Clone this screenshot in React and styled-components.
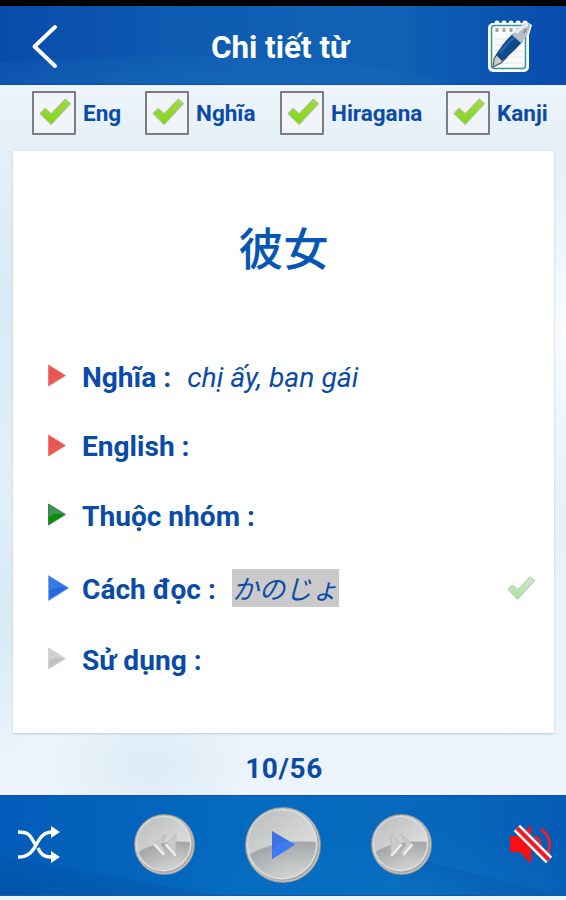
import React from "react";
import styled, { createGlobalStyle } from "styled-components";

const GlobalStyle = createGlobalStyle`
  * { box-sizing: border-box; }
  body { margin: 0; background: #fff; }
`;

const Screen = styled.div`
  width: 566px;
  height: 900px;
  overflow: hidden;
  display: flex;
  flex-direction: column;
  font-family: Roboto, "Noto Sans CJK JP", sans-serif;
  color: #0b4ba8;
  background:
    radial-gradient(ellipse 50px 150px at 0 610px, #d5e8f4, transparent),
    radial-gradient(ellipse 100px 70px at 150px 765px, #dcebf5, transparent),
    radial-gradient(ellipse 50px 200px at 566px 330px, #fbfdff, transparent),
    linear-gradient(#edf5fb 80px, #e5eff7 150px, #d9e9f5 300px, #e9f3fa 600px, #edf4fb 800px);
`;

const StatusStrip = styled.div`
  height: 6px;
  flex: none;
  background: #000;
`;

const Header = styled.header`
  height: 79px;
  flex: none;
  display: grid;
  grid-template-columns: 90px 1fr 90px;
  align-items: center;
  border-bottom: 1px solid #0a4ca6;
  background:
    radial-gradient(ellipse 300px 36px at 160px 86px, rgba(30, 116, 190, 0.3) 50%, rgba(30, 116, 190, 0.15) 97%, transparent 100%),
    linear-gradient(90deg, #084bab 0, #0f5cb2 35%, #1062b5 68%, #084bad 100%);
`;

const Title = styled.h1`
  margin: 5px 0 0 -6px;
  font-size: 31.4px;
  line-height: 40px;
  font-weight: 700;
  text-align: center;
  color: #fff;
`;

const IconButton = styled.button`
  display: flex;
  justify-content: ${(p) => p.$justify || "center"};
  padding: 0;
  border: 0;
  background: none;
`;

const BackButton = styled(IconButton)`
  padding: 3px 0 0 31px;
`;

const NoteButton = styled(IconButton)`
  padding: 1px 0 0 11px;
`;

const MuteButton = styled(IconButton)`
  padding-left: 7px;
`;

const Filters = styled.div`
  height: 66px;
  flex: none;
  display: grid;
  grid-template-columns: 113px 135px 166px 1fr;
  align-items: start;
  padding: 6px 0 0 32px;
`;

const Filter = styled.label`
  display: flex;
  align-items: center;
  gap: 7px;
  font-size: 22.5px;
  line-height: 44px;
  font-weight: 700;
  white-space: nowrap;
`;

const CheckBox = styled.span`
  width: 44px;
  height: 44px;
  display: flex;
  align-items: center;
  justify-content: center;
  padding: 0 0 3px 2px;
  border: 2px solid #7a7e82;
  border-radius: 1px;
  background: #f1f5fa;
`;

const Card = styled.main`
  height: 582px;
  flex: none;
  margin: 0 12px 0 13px;
  background: #fff;
  box-shadow: 0 1px 2px #b9c8d4;
`;

const Word = styled.div`
  height: 190px;
  display: flex;
  align-items: center;
  justify-content: center;
  font-family: "Noto Sans CJK JP", sans-serif;
  font-size: 45px;
  font-weight: 500;
  color: #0757b2;
`;

const Details = styled.div`
  display: grid;
  grid-template-rows: 69px 70px 69px 77px 65px;
  padding: 0 18px 0 35px;
`;

const Detail = styled.div`
  display: grid;
  grid-template-columns: 34px auto 1fr auto;
  align-items: center;
  font-size: 28.1px;
`;

const Label = styled.span`
  font-weight: 700;
  padding-top: 3px;
`;

const Meaning = styled.span`
  padding-top: 3px;
  margin-left: 16px;
  font-size: 28.3px;
  font-style: italic;
`;

const Reading = styled.span`
  justify-self: start;
  margin-left: 16px;
  height: 38px;
  width: 107px;
  line-height: 37px;
  text-align: center;
  font-family: "Noto Sans CJK JP", sans-serif;
  font-size: 26.5px;
  font-style: italic;
  background: #cacaca;
`;

const Counter = styled.div`
  height: 62px;
  flex: none;
  padding: 8px 0 0 2px;
  display: flex;
  align-items: center;
  justify-content: center;
  font-size: 28px;
  font-weight: 700;
  letter-spacing: 0.6px;
`;

const Player = styled.footer`
  height: 101px;
  flex: none;
  display: grid;
  grid-template-columns: 78px 174px 62px 174px 78px;
  align-items: center;
  justify-items: center;
  padding-bottom: 2px;
  border-top: 1px solid #1450a5;
  border-bottom: 1px solid #1458a6;
  background:
    linear-gradient(190.2deg, transparent 70%, rgba(0, 70, 140, 0.18) 71%, rgba(0, 70, 140, 0.4)) 0 0 / 210px 101px no-repeat,
    linear-gradient(194.8deg, transparent 70%, rgba(0, 78, 158, 0.25) 71%, transparent 92%) 400px 0 / 166px 101px no-repeat,
    radial-gradient(ellipse 260px 60px at 410px 90px, rgba(16, 120, 198, 0.4), transparent),
    linear-gradient(90deg, #025cb9, #046bc0 45%, #0668bd 75%, #055bb5);
`;

const TransportGroup = styled.div`
  grid-column: 2 / 5;
  width: 298px;
  display: flex;
  align-items: center;
  justify-content: space-between;
`;

const RoundButton = styled.button`
  width: ${(p) => p.$size}px;
  height: ${(p) => p.$size}px;
  padding: 0;
  display: flex;
  align-items: center;
  justify-content: center;
  border: 1.5px solid #91979c;
  border-radius: 50%;
  box-shadow: inset 0 0 0 1px #c9c8c5, inset -1px -1px 0 1.5px #aaa7a4, inset -1px -1px 1px 3px #e1e1df;
  background:
    radial-gradient(ellipse 100% 60% at 75% 104%, #dededc 0, #c6c8c8 45%, #a3a7a7 96%, transparent 100%),
    linear-gradient(145deg, #b8bbbb, #d9dada 60%, #c8cbcb);
`;

const Tick = ({ pale, size = 34 }) => (
  <svg width={size} height={size * 0.9} viewBox="0 0 31 28">
    <defs>
      <linearGradient id={pale ? "paleTick" : "tick"} x1="0" y1="0" x2="0" y2="1">
        <stop stopColor={pale ? "#d9e5d8" : "#a3da49"} />
        <stop offset="1" stopColor={pale ? "#a5e597" : "#7ed615"} />
      </linearGradient>
    </defs>
    <path
      d="M2 16 L6.5 11.5 L12 16.5 L25 3 L29.5 7 L12 26 Z"
      fill={`url(#${pale ? "paleTick" : "tick"})`}
      stroke={pale ? "#bccdbb" : "#a8c77b"}
      strokeWidth="1.2"
      strokeLinejoin="round"
    />
  </svg>
);

const markerColors = {
  red: ["#e45450", "#f57c72", "#e65a55"],
  green: ["#3d9450", "#437c4c", "#07900d"],
  blue: ["#3778e7", "#3d83ed", "#2c66dc"],
  gray: ["#cfd1d1", "#d2d4d4", "#bfc1c1"],
};

const Marker = ({ color }) => {
  const [top, middle, bottom] = markerColors[color];
  const big = color === "blue";
  return (
    <svg width={big ? 21 : 18} height={big ? 26 : 23} viewBox="0 0 18 23">
      <path d="M.5 1 L17.5 11.5 L.5 22 Z" fill={top} stroke={middle} />
      <path d="M1 14 Q7 9 16.5 11.5 L1 21 Z" fill={bottom} />
    </svg>
  );
};

const BackIcon = () => (
  <svg width="28" height="44" viewBox="0 0 28 44">
    <path d="M24 2 L3.5 21.5 L24 41" fill="none" stroke="#fff" strokeWidth="3.8" strokeLinecap="round" strokeLinejoin="round" />
  </svg>
);

const NoteIcon = () => (
  <svg width="46" height="54" viewBox="0 0 46 54">
    <rect x="1" y="4" width="41" height="49" rx="5" fill="#fff" />
    <path d="M10 4h.1M17 4h.1M24 4h.1M31 4h.1M38 4h.1" stroke="#fff" strokeWidth="5" strokeLinecap="round" />
    <path d="M34 10L40 3L45 6L42 16L36 22Z" fill="#fff" />
    <rect x="4.5" y="6.5" width="34" height="43" rx="3" fill="#f8fbf8" stroke="#37959c" strokeWidth="1.5" />
    <path d="M10 9v4M17 9v4M24 9v4M31 9v4" stroke="#a0a5a5" strokeWidth="3" />
    <path d="M7 20h29M7 26h29M7 32h29M7 38h29M7 44h29" stroke="#dde7e4" />
    <path d="M6 48 L7 40 L12 32 L20 38 L14 44 Z" fill="#c9cfcf" stroke="#4d5963" strokeWidth="1.2" />
    <path d="M9 36 Q17 22 27 14 L36 22 Q26 34 15 42 Z" fill="#124989" />
    <path d="M13 34 Q21 23 28 18" stroke="#2468ae" strokeWidth="2.5" fill="none" />
    <path d="M25 16 L34 7 Q39 3 43 5 Q43 12 38 19 L34 24 Z" fill="#b7bec7" />
    <path d="M29 14 Q35 7 41 6" stroke="#e9edef" strokeWidth="3" fill="none" />
    <path d="M37 14L39 10" stroke="#6b7886" strokeWidth="1.5" />
  </svg>
);

const ShuffleIcon = () => (
  <svg width="44" height="38" viewBox="0 0 44 38">
    <path d="M1 6 C13 6 13 10 18 18 M21 22 C25 31 30 31 36 31 M1 31 C23 31 16 6 36 6" fill="none" stroke="#fff" strokeWidth="3.4" />
    <path d="M34 0 L43 6 L34 12 Z M34 25 L43 31 L34 37 Z" fill="#fff" />
  </svg>
);

const SkipIcon = ({ back }) => (
  <svg width="26" height="26" viewBox="0 0 26 26">
    <g transform={back ? "translate(26 0) scale(-1 1)" : undefined} strokeLinejoin="round">
      <path d="M2 2 L13 13 L2 24 Z M12 2 L24 13 L14 24 L12 20 L17 13 Z" fill="#c8cccb" stroke="#b8bdbc" />
      <path d="M3 23 L12 13 M15 22 L23 13" stroke="#ecefec" strokeWidth="2.4" strokeLinecap="round" />
    </g>
  </svg>
);

const PlayIcon = () => (
  <svg width="26" height="30" viewBox="0 0 26 30">
    <path d="M2 1 L25 14.5 L2 29 Z" fill="#3c70e3" />
    <path d="M2 19 Q9 12 19 11.5 L25 14.5 L2 29 Z" fill="#3d7bf5" />
  </svg>
);

const MutedIcon = () => (
  <svg width="44" height="42" viewBox="0 0 44 42">
    <path d="M1 12h10L22 1v39L11 28H1Z" fill="#fb0d14" />
    <path d="M26 12 Q36 20 27 31 M32 5 Q49 19 33 36" fill="none" stroke="#e32331" strokeWidth="3" />
    <path d="M8 4 L40 36" stroke="#fff" strokeWidth="9" />
    <path d="M8 4 L40 36" stroke="#ed1b25" strokeWidth="4" />
  </svg>
);

const filters = ["Eng", "Nghĩa", "Hiragana", "Kanji"];

const details = [
  { label: "Nghĩa :", color: "red", meaning: "chị ấy, bạn gái" },
  { label: "English :", color: "red" },
  { label: "Thuộc nhóm :", color: "green" },
  { label: "Cách đọc :", color: "blue", reading: "かのじょ", checked: true },
  { label: "Sử dụng :", color: "gray" },
];

export default function App() {
  return (
    <Screen>
      <GlobalStyle />
      <StatusStrip />
      <Header>
        <BackButton $justify="flex-start" aria-label="Back"><BackIcon /></BackButton>
        <Title>Chi tiết từ</Title>
        <NoteButton $justify="flex-start" aria-label="Notes"><NoteIcon /></NoteButton>
      </Header>
      <Filters>
        {filters.map((name) => (
          <Filter key={name}>
            <CheckBox><Tick /></CheckBox>
            {name}
          </Filter>
        ))}
      </Filters>
      <Card>
        <Word>彼女</Word>
        <Details>
          {details.map((d) => (
            <Detail key={d.label}>
              <Marker color={d.color} />
              <Label>{d.label}</Label>
              {d.meaning && <Meaning>{d.meaning}</Meaning>}
              {d.reading && <Reading>{d.reading}</Reading>}
              {d.checked && <Tick pale size={30} />}
            </Detail>
          ))}
        </Details>
      </Card>
      <Counter>10/56</Counter>
      <Player>
        <IconButton aria-label="Shuffle"><ShuffleIcon /></IconButton>
        <TransportGroup>
          <RoundButton $size={61} aria-label="Previous"><SkipIcon back /></RoundButton>
          <RoundButton $size={76} aria-label="Play"><PlayIcon /></RoundButton>
          <RoundButton $size={61} aria-label="Next"><SkipIcon /></RoundButton>
        </TransportGroup>
        <MuteButton aria-label="Muted"><MutedIcon /></MuteButton>
      </Player>
    </Screen>
  );
}
